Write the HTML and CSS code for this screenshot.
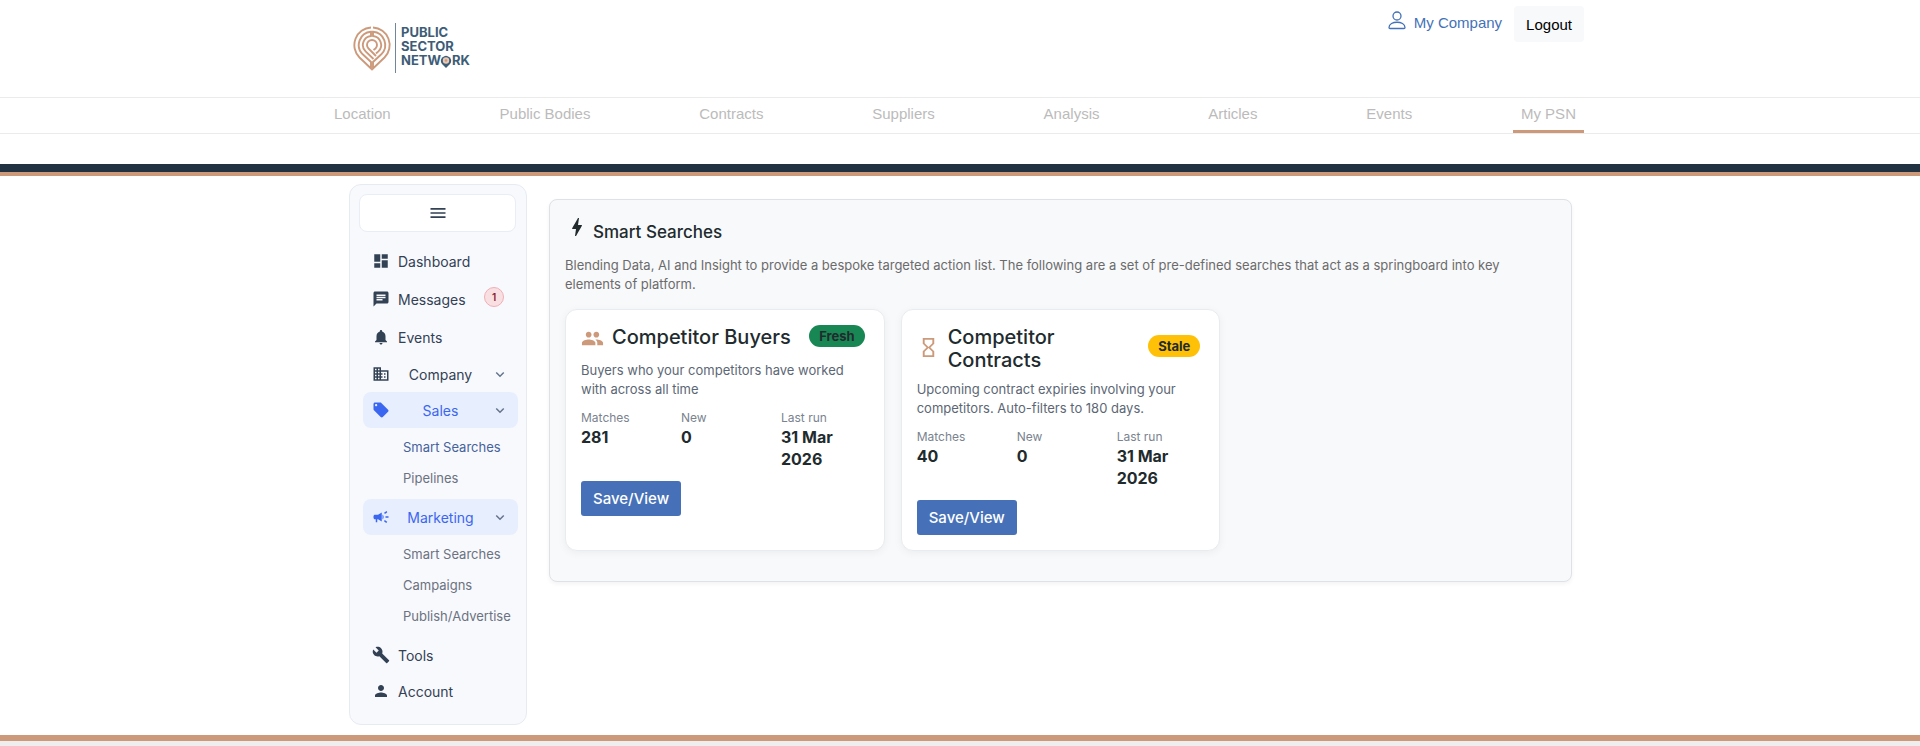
FILE: index.html
```html
<!DOCTYPE html>
<html lang="en">

<head>
    <meta charset="UTF-8">
    <meta name="viewport" content="width=device-width, initial-scale=1.0">
    <title>Smart Searches</title>
    <link rel="stylesheet" href="styles.css">
</head>

<body>
    <!--Header-->
    <header>
        <div class="container topbar">
            <a class="logo" href="#" aria-label="Public Sector Network">
                <svg width="120" height="52" viewBox="0 0 120 52">
                    <g fill="none" stroke="#cc9a7b" stroke-width="1.900">
                        <path d="M18 5.500 A17.600 17.600 0 0 0 6.500 35.500 L18 46.500 V40 L9.700 32.300 A13.200 13.200 0 0 1 18 9.800 V14 A9 9 0 0 0 12.600 29.400 L20.500 37" />
                        <path d="M20 5.500 A17.600 17.600 0 0 1 31.500 35.500 L20 46.500 V40 L28.300 32.300 A13.200 13.200 0 0 0 20 9.800 V14 A9 9 0 0 1 25.400 29.400 L23 31.500" />
                        <path d="M20.500 28 L22.500 26.500 A5 5 0 1 0 15.500 26.500 L23 34" />
                    </g>
                    <path d="M42.500 1 V51" stroke="#6f8799" stroke-width="1" />
                    <g class="logo-text">
                        <text x="48" y="15">PUBLIC</text>
                        <text x="48" y="29">SECTOR</text>
                        <text x="48" y="43">NETW</text>
                        <text x="99" y="43">RK</text>
                    </g>
                    <path d="M93 46 L89 42 A5 5 0 1 1 97 42 Z" fill="#3d5d77" />
                    <circle cx="93" cy="38.500" r="3.200" fill="#e8c8b6" />
                    <circle cx="93" cy="38.500" r="1.300" fill="#cc9a7b" />
                </svg>
            </a>
            <div class="account">
                <a class="company" href="#">
                    <svg width="20" height="20" viewBox="0 0 20 20" fill="none" stroke="#4472b8" stroke-width="1.300">
                        <circle cx="10" cy="6" r="4" />
                        <path d="M2 17.500 C2 10.500 18 10.500 18 17.500 Q18 18.500 17 18.500 H3 Q2 18.500 2 17.500 Z" />
                    </svg>
                    My Company
                </a>
                <button class="logout" type="button">Logout</button>
            </div>
        </div>
        <nav class="mainnav">
            <div class="container navlinks">
                <a href="#">Location</a>
                <a href="#">Public Bodies</a>
                <a href="#">Contracts</a>
                <a href="#">Suppliers</a>
                <a href="#">Analysis</a>
                <a href="#">Articles</a>
                <a href="#">Events</a>
                <a class="current" href="#">My PSN</a>
            </div>
        </nav>
    </header>

    <div class="container content">
        <!--Sidebar-->
        <aside class="sidebar">
            <button class="toggle" type="button" aria-label="Toggle menu">
                <svg width="20" height="20" viewBox="0 0 24 24"><path d="M3 18h18v-2H3v2zm0-5h18v-2H3v2zm0-7v2h18V6H3z" /></svg>
            </button>
            <ul class="menu">
                <li><a class="item tall" href="#">
                    <svg class="icon" viewBox="0 0 24 24"><path d="M3 13h8V3H3v10zm0 8h8v-6H3v6zm10 0h8V11h-8v10zm0-18v6h8V3h-8z" /></svg>
                    Dashboard</a></li>
                <li><a class="item tall" href="#">
                    <svg class="icon" viewBox="0 0 24 24"><path d="M20 2H4c-1.100 0-2 .9-2 2v18l4-4h14c1.100 0 2-.9 2-2V4c0-1.100-.9-2-2-2zM6 9h12v2H6V9zm8 5H6v-2h8v2zm4-6H6V6h12v2z" /></svg>
                    Messages <span class="count">1</span></a></li>
                <li><a class="item tall" href="#">
                    <svg class="icon" viewBox="0 0 24 24"><path d="M12 22c1.100 0 2-.9 2-2h-4c0 1.100.9 2 2 2zm6-6v-5c0-3.070-1.630-5.640-4.500-6.320V4c0-.83-.67-1.500-1.500-1.500s-1.500.67-1.500 1.500v.68C7.640 5.360 6 7.920 6 11v5l-2 2v1h16v-1l-2-2z" /></svg>
                    Events</a></li>
                <li><button class="item group" type="button">
                    <svg class="icon" viewBox="0 0 24 24"><path d="M12 7V3H2v18h20V7H12zM6 19H4v-2h2v2zm0-4H4v-2h2v2zm0-4H4V9h2v2zm0-4H4V5h2v2zm4 12H8v-2h2v2zm0-4H8v-2h2v2zm0-4H8V9h2v2zm0-4H8V5h2v2zm10 12h-8v-2h2v-2h-2v-2h2v-2h-2V9h8v10zm-2-8h-2v2h2v-2zm0 4h-2v2h2v-2z" /></svg>
                    Company
                    <svg class="icon chevron" viewBox="0 0 24 24"><path d="M7 10l5 5 5-5" /></svg>
                </button></li>
                <li><button class="item group open" type="button">
                    <svg class="icon" viewBox="0 0 24 24"><path d="M21.410 11.580l-9-9C12.050 2.220 11.550 2 11 2H4c-1.100 0-2 .9-2 2v7c0 .55.22 1.050.59 1.420l9 9c.36.36.86.58 1.410.58.55 0 1.050-.22 1.410-.59l7-7c.37-.36.59-.86.59-1.410 0-.55-.23-1.060-.59-1.420zM5.500 7C4.670 7 4 6.330 4 5.500S4.670 4 5.500 4 7 4.670 7 5.500 6.330 7 5.500 7z" /></svg>
                    Sales
                    <svg class="icon chevron" viewBox="0 0 24 24"><path d="M7 10l5 5 5-5" /></svg>
                </button>
                    <ul class="submenu">
                        <li><a class="active" href="#">Smart Searches</a></li>
                        <li><a href="#">Pipelines</a></li>
                    </ul>
                </li>
                <li><button class="item group open" type="button">
                    <svg class="icon" viewBox="0 0 24 24"><path d="M18 11v2h4v-2h-4zm-2 6.610c.96.71 2.210 1.650 3.200 2.390.4-.53.8-1.070 1.200-1.600-.99-.74-2.240-1.680-3.200-2.400-.4.540-.8 1.080-1.200 1.610zM20.400 5.600c-.4-.53-.8-1.070-1.200-1.600-.99.740-2.240 1.680-3.200 2.400.4.530.8 1.070 1.200 1.600.96-.72 2.210-1.650 3.200-2.400zM4 9c-1.100 0-2 .9-2 2v2c0 1.100.9 2 2 2h1v4h2v-4h1l5 3V6L8 9H4zm11.500 3c0-1.330-.58-2.530-1.500-3.350v6.690c.92-.81 1.500-2.010 1.500-3.340z" /></svg>
                    Marketing
                    <svg class="icon chevron" viewBox="0 0 24 24"><path d="M7 10l5 5 5-5" /></svg>
                </button>
                    <ul class="submenu">
                        <li><a href="#">Smart Searches</a></li>
                        <li><a href="#">Campaigns</a></li>
                        <li><a href="#">Publish/Advertise</a></li>
                    </ul>
                </li>
                <li><a class="item" href="#">
                    <svg class="icon" viewBox="0 0 24 24"><path d="M22.700 19l-9.100-9.100c.9-2.300.4-5-1.500-6.900-2-2-5-2.400-7.400-1.300L9 6 6 9 1.600 4.700C.4 7.100.9 10.100 2.900 12.100c1.900 1.900 4.600 2.400 6.900 1.500l9.100 9.100c.4.400 1 .4 1.400 0l2.300-2.300c.5-.4.5-1.100.1-1.400z" /></svg>
                    Tools</a></li>
                <li><a class="item" href="#">
                    <svg class="icon" viewBox="0 0 24 24"><path d="M12 12c2.210 0 4-1.790 4-4s-1.790-4-4-4-4 1.790-4 4 1.790 4 4 4zm0 2c-2.670 0-8 1.340-8 4v2h16v-2c0-2.660-5.330-4-8-4z" /></svg>
                    Account</a></li>
            </ul>
        </aside>

        <!--Smart searches-->
        <main class="panel">
            <h1>
                <svg width="24" height="24" viewBox="0 0 24 24"><path d="M11 21h-1l1-7H7.500c-.58 0-.57-.32-.38-.66.190-.34.050-.08.070-.12C8.480 10.940 10.420 7.540 13 3h1l-1 7h3.500c.49 0 .56.33.47.51l-.07.15C12.960 17.550 11 21 11 21z" /></svg>
                Smart Searches
            </h1>
            <p class="intro">Blending Data, AI and Insight to provide a bespoke targeted action list. The following are a set of pre-defined searches that act as a springboard into key elements of platform.</p>

            <div class="cards">
                <section class="card">
                    <div class="card-head">
                        <svg width="23" height="23" viewBox="0 0 24 24"><path d="M16 11c1.660 0 2.990-1.340 2.990-3S17.660 5 16 5c-1.660 0-3 1.340-3 3s1.340 3 3 3zm-8 0c1.660 0 2.990-1.340 2.990-3S9.660 5 8 5C6.340 5 5 6.340 5 8s1.340 3 3 3zm0 2c-2.330 0-7 1.170-7 3.500V19h14v-2.500c0-2.330-4.670-3.500-7-3.500zm8 0c-.29 0-.62.020-.97.050 1.160.84 1.970 1.970 1.970 3.450V19h6v-2.500c0-2.330-4.670-3.500-7-3.500z" /></svg>
                        <h2>Competitor Buyers</h2>
                        <span class="badge fresh">Fresh</span>
                    </div>
                    <p class="text">Buyers who your competitors have worked with across all time</p>
                    <dl class="stats">
                        <div><dt>Matches</dt><dd>281</dd></div>
                        <div><dt>New</dt><dd>0</dd></div>
                        <div><dt>Last run</dt><dd>31 Mar 2026</dd></div>
                    </dl>
                    <button class="save" type="button">Save/View</button>
                </section>

                <section class="card">
                    <div class="card-head">
                        <svg width="23" height="23" viewBox="0 0 24 24"><path d="M6 2v6l4 4-4 4v6h12v-6l-4-4 4-4V2H6zm10 14.500V20H8v-3.500l4-4 4 4zm-4-5l-4-4V4h8v3.500l-4 4z" /></svg>
                        <h2>Competitor Contracts</h2>
                        <span class="badge stale">Stale</span>
                    </div>
                    <p class="text">Upcoming contract expiries involving your competitors. Auto-filters to 180 days.</p>
                    <dl class="stats">
                        <div><dt>Matches</dt><dd>40</dd></div>
                        <div><dt>New</dt><dd>0</dd></div>
                        <div><dt>Last run</dt><dd>31 Mar 2026</dd></div>
                    </dl>
                    <button class="save" type="button">Save/View</button>
                </section>
            </div>
        </main>
    </div>

    <footer></footer>
</body>

</html>
```
FILE: styles.css
```css
* {
    box-sizing: border-box;
}

body {
    margin: 0;
    min-height: 100vh;
    display: flex;
    flex-direction: column;
    background-color: white;
    color: #212b2e;
    font-family: Inter, sans-serif;
    font-size: 14px;
}

a {
    text-decoration: none;
}

button {
    font-family: inherit;
    cursor: pointer;
}

h1,
h2,
p,
dl,
dd,
ul {
    margin: 0;
    padding: 0;
}

ul {
    list-style: none;
}

.container {
    width: 100%;
    max-width: 1268px;
    margin: 0 auto;
}

/* Header */
header {
    border-bottom: 4px solid #cc9a7b;
    font-family: "Liberation Sans", Arial, sans-serif;
    font-size: 15px;
}

.topbar {
    display: flex;
    justify-content: space-between;
    align-items: flex-start;
    height: 97px;
    padding: 6px 10px 0 27px;
}

.logo {
    padding-top: 16px;
}

.logo-text {
    font-family: Inter, sans-serif;
    font-size: 13px;
    font-weight: 700;
    fill: #3d5d77;
}

.account {
    display: flex;
    gap: 12px;
}

.company {
    display: flex;
    gap: 7px;
    line-height: 34px;
    color: #4472b8;
}

.company svg {
    margin-top: 4px;
}

.logout {
    height: 36px;
    padding: 0 12px;
    border: none;
    border-radius: 4px;
    background-color: #f8f9fa;
    color: black;
    font-size: 15px;
}

.mainnav {
    border-top: 1px solid #ebebeb;
    border-bottom: 8px solid #213343;
}

.mainnav::after {
    content: "";
    display: block;
    height: 30px;
    border-top: 1px solid #ebebeb;
}

.navlinks {
    display: flex;
    justify-content: space-between;
    padding-right: 10px;
}

.navlinks a {
    padding: 0 8px;
    border-bottom: 3px solid transparent;
    line-height: 32px;
    color: #bbb;
}

.navlinks a.current {
    border-color: #cc9a7b;
}

/* Sidebar */
.content {
    display: flex;
    align-items: flex-start;
    gap: 22px;
    flex: 1;
    padding: 8px 22px 9px 23px;
}

.sidebar {
    flex: 0 0 178px;
    padding: 9px 10px 15px 9px;
    border: 1px solid #e6ebf2;
    border-radius: 12px;
    background-color: #f8f9fd;
}

.toggle {
    display: flex;
    align-items: center;
    justify-content: center;
    width: 100%;
    height: 38px;
    margin-bottom: 10px;
    border: 1px solid #e9edf5;
    border-radius: 8px;
    background-color: white;
    fill: #334155;
}

.icon {
    flex: none;
    width: 18px;
    height: 18px;
    fill: currentColor;
}

.menu {
    margin: 0 -2px 0 4px;
}

.item {
    display: flex;
    align-items: center;
    gap: 8px;
    width: 100%;
    height: 36px;
    padding: 0 9px;
    border: none;
    border-radius: 8px;
    background-color: transparent;
    color: #334155;
    font-size: 14px;
}

.tall {
    height: 38px;
}

.group {
    justify-content: space-between;
}

.open {
    background-color: #e7eefe;
    color: #3b66f0;
}

.item .chevron {
    fill: none;
    stroke: #64748b;
    stroke-width: 2;
}

.count {
    width: 20px;
    height: 20px;
    margin: 0 5px 4px auto;
    border: 1px solid #f1aeb5;
    border-radius: 10px;
    background-color: #f8dfe2;
    color: #8a1c28;
    font-size: 10px;
    font-weight: 600;
    line-height: 18px;
    text-align: center;
}

.submenu {
    padding: 4px 0 5px 40px;
}

.submenu a {
    display: block;
    line-height: 31px;
    font-size: 13px;
    color: #6b7280;
}

.submenu a.active {
    color: #46629c;
}

/* Panel */
.panel {
    flex: 1;
    margin-top: 15px;
    padding: 15px 15px 30px;
    border: 1px solid #dee2e6;
    border-radius: 8px;
    background-color: #f8f9fb;
    box-shadow: 0 2px 4px rgba(0, 0, 0, 0.05);
}

h1 {
    display: flex;
    gap: 4px;
    font-size: 17px;
    font-weight: 500;
    line-height: 34px;
}

h1 svg {
    fill: currentColor;
}

.intro {
    margin: 7px 0 15px;
    padding-right: 16px;
    font-size: 13px;
    line-height: 19px;
    color: #6b6b6b;
}

.cards {
    display: grid;
    grid-template-columns: repeat(3, 1fr);
    gap: 16px;
}

.card {
    padding: 15px;
    border: 1px solid #e9ecef;
    border-radius: 12px;
    background-color: white;
    box-shadow: 0 2px 8px rgba(0, 0, 0, 0.05);
}

.card-head {
    display: flex;
    align-items: center;
    gap: 8px;
    min-height: 29px;
    margin-bottom: 7px;
    padding-right: 4px;
}

.card-head svg {
    flex: none;
    margin-bottom: 3px;
    fill: #cc9a7b;
}

h2 {
    align-self: flex-start;
    padding: 1px 0;
    font-size: 20px;
    font-weight: 500;
    line-height: 23px;
}

.badge {
    margin: 0 0 7px auto;
    padding: 0 10px;
    border-radius: 11px;
    font-size: 13px;
    font-weight: 700;
    line-height: 22px;
}

.fresh {
    background-color: #198754;
}

.stale {
    background-color: #ffc107;
}

.text {
    margin-bottom: 10px;
    padding-right: 16px;
    font-size: 13px;
    line-height: 19px;
    color: #5c6775;
}

.stats {
    display: grid;
    grid-template-columns: 100px 100px 1fr;
    margin-bottom: 11px;
}

dt {
    font-size: 12px;
    line-height: 17px;
    color: #7a838f;
}

dd {
    font-size: 16px;
    font-weight: 700;
    line-height: 22px;
}

.stats div:last-child {
    padding-right: 16px;
}

.save {
    height: 35px;
    padding: 0 12px;
    border: none;
    border-radius: 3px;
    background-color: #4671b8;
    color: white;
    font-size: 15px;
    font-weight: 500;
}

footer {
    height: 11px;
    border-top: 6px solid #cc9a7b;
    background-color: #eee;
}
```
